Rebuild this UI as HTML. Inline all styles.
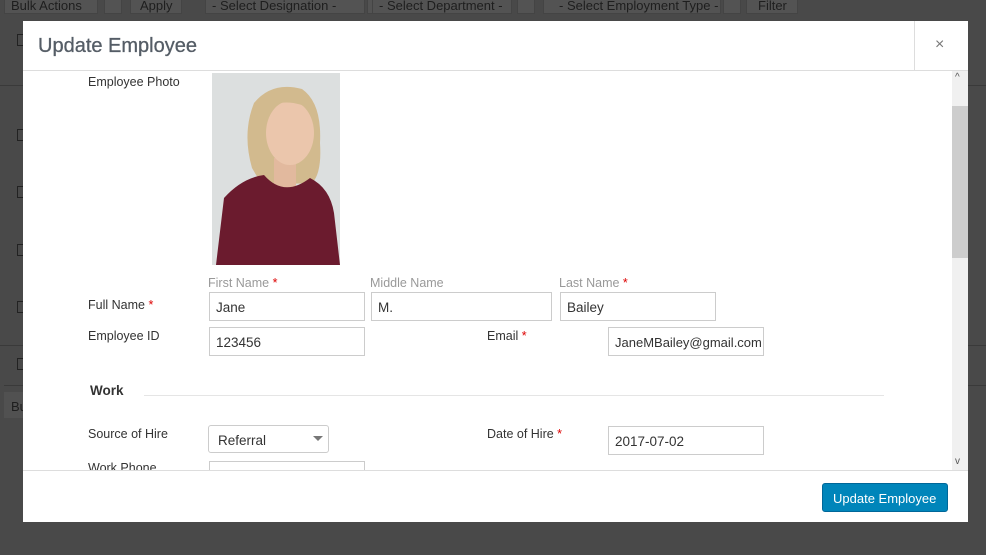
<!DOCTYPE html>
<html><head><style>
*{box-sizing:border-box;margin:0;padding:0}
body{width:986px;height:555px;overflow:hidden;background:#494949;font-family:"Liberation Sans",sans-serif;position:relative}
.a{position:absolute}
.bg{color:#1e1e1e;font-size:13px}
.bb{position:absolute;background:#535353;border:1px solid #444;height:18px;top:-4px}
.cb{position:absolute;left:17px;width:10px;height:12px;border:1px solid #222}
.modal{position:absolute;left:23px;top:21px;width:945px;height:501px;background:#fff}
.lbl{position:absolute;font-size:12.5px;color:#333}
.sub{position:absolute;font-size:12.5px;color:#999}
.in{position:absolute;height:29px;border:1px solid #ccc;font-size:13.5px;color:#333;padding:7px 6px 0;background:#fff;overflow:hidden;white-space:nowrap}
.r{color:#d00}
</style></head><body>
<div class="bb" style="left:4px;width:94px"></div><div class="a bg" style="left:11px;top:-2px">Bulk Actions</div>
<div class="bb" style="left:104px;width:18px"></div>
<div class="bb" style="left:130px;width:52px"></div><div class="a bg" style="left:140px;top:-2px">Apply</div>
<div class="bb" style="left:205px;width:160px"></div><div class="a bg" style="left:212px;top:-2px">- Select Designation -</div>
<div class="bb" style="left:367px;width:18px"></div>
<div class="bb" style="left:372px;width:140px"></div><div class="a bg" style="left:379px;top:-2px">- Select Department -</div>
<div class="bb" style="left:517px;width:18px"></div>
<div class="bb" style="left:543px;width:178px"></div><div class="a bg" style="left:559px;top:-2px">- Select Employment Type -</div>
<div class="bb" style="left:723px;width:18px"></div>
<div class="bb" style="left:746px;width:52px"></div><div class="a bg" style="left:758px;top:-2px">Filter</div>
<div class="a" style="left:0;top:85px;width:986px;height:1px;background:#3a3a3a"></div>
<div class="a" style="left:0;top:345px;width:986px;height:1px;background:#3a3a3a"></div>
<div class="a" style="left:4px;top:385px;width:986px;height:1px;background:#3a3a3a"></div>
<div class="cb" style="top:34px"></div><div class="cb" style="top:129px"></div><div class="cb" style="top:186px"></div><div class="cb" style="top:244px"></div><div class="cb" style="top:301px"></div><div class="cb" style="top:358px"></div>
<div class="a" style="left:4px;top:392px;width:20px;height:26px;background:#515151"></div><div class="a bg" style="left:11px;top:399px">Bu</div>

<div class="modal">
<div class="a" style="left:15px;top:14px;font-size:20px;color:#555d66;-webkit-text-stroke:0.3px #555d66">Update Employee</div>
<div class="a" style="left:891px;top:0;width:1px;height:49px;background:#ddd"></div>
<div class="a" style="left:912px;top:15px;font-size:16px;color:#777">×</div>
<div class="a" style="left:0;top:49px;width:945px;height:1px;background:#ddd"></div>
<div class="a" style="left:0;top:449px;width:945px;height:1px;background:#ddd"></div>
<div class="a" style="left:929px;top:50px;width:16px;height:399px;background:#f0f0f0"></div>
<div class="a" style="left:929px;top:85px;width:16px;height:152px;background:#cdcdcd"></div>
<div class="a" style="left:932px;top:51px;font-size:10px;color:#555">^</div>
<div class="a" style="left:932px;top:435px;font-size:10px;color:#555">v</div>
<div class="a" style="left:799px;top:462px;width:126px;height:29px;background:#0085ba;border:1px solid #006799;border-radius:3px;color:#fff;font-size:13px;padding:7px 0 0 10px">Update Employee</div>
</div>

<div class="lbl" style="left:88px;top:75px">Employee Photo</div>
<svg class="a" style="left:212px;top:73px" width="128" height="192" viewBox="0 0 128 192">
<rect width="128" height="192" fill="#dcdfdf"/>
<path d="M40 95 Q30 60 42 30 Q60 8 90 16 Q110 30 108 70 Q110 100 100 110 L50 112Z" fill="#d2ba8e"/>
<rect x="62" y="85" width="22" height="30" fill="#e2b99e"/>
<ellipse cx="78" cy="60" rx="24" ry="32" fill="#ebc6ac"/>
<path d="M48 40 Q70 20 104 38 Q100 22 80 18 Q55 18 48 40Z" fill="#d2ba8e"/>
<path d="M4 192 L12 125 Q30 105 52 102 Q72 125 98 105 Q118 115 122 140 L128 192Z" fill="#6b1b2e"/>
</svg>
<div class="sub" style="left:208px;top:276px">First Name <span class="r">*</span></div>
<div class="sub" style="left:370px;top:276px">Middle Name</div>
<div class="sub" style="left:559px;top:276px">Last Name <span class="r">*</span></div>
<div class="lbl" style="left:88px;top:298px">Full Name <span class="r">*</span></div>
<div class="in" style="left:209px;top:292px;width:156px">Jane</div>
<div class="in" style="left:371px;top:292px;width:181px">M.</div>
<div class="in" style="left:560px;top:292px;width:156px">Bailey</div>
<div class="lbl" style="left:88px;top:329px">Employee ID</div>
<div class="in" style="left:209px;top:327px;width:156px">123456</div>
<div class="lbl" style="left:487px;top:329px">Email <span class="r">*</span></div>
<div class="in" style="left:608px;top:327px;width:156px;font-size:13px">JaneMBailey@gmail.com</div>
<div class="a" style="left:90px;top:383px;font-size:13.5px;font-weight:bold;color:#333">Work</div>
<div class="a" style="left:144px;top:395px;width:740px;height:1px;background:#e5e5e5"></div>
<div class="lbl" style="left:88px;top:427px">Source of Hire</div>
<div class="in" style="left:208px;top:425px;width:121px;height:28px;border-radius:3px;padding-left:9px">Referral</div>
<div class="a" style="left:313px;top:436px;border:5px solid transparent;border-top:5px solid #777"></div>
<div class="lbl" style="left:487px;top:427px">Date of Hire <span class="r">*</span></div>
<div class="in" style="left:608px;top:426px;width:156px">2017-07-02</div>
<div class="a" style="left:23px;top:460px;width:928px;height:10px;overflow:hidden"><div class="lbl" style="left:65px;top:1px">Work Phone</div><div class="a" style="left:186px;top:1px;width:156px;height:20px;border:1px solid #ccc"></div></div>
</body></html>
